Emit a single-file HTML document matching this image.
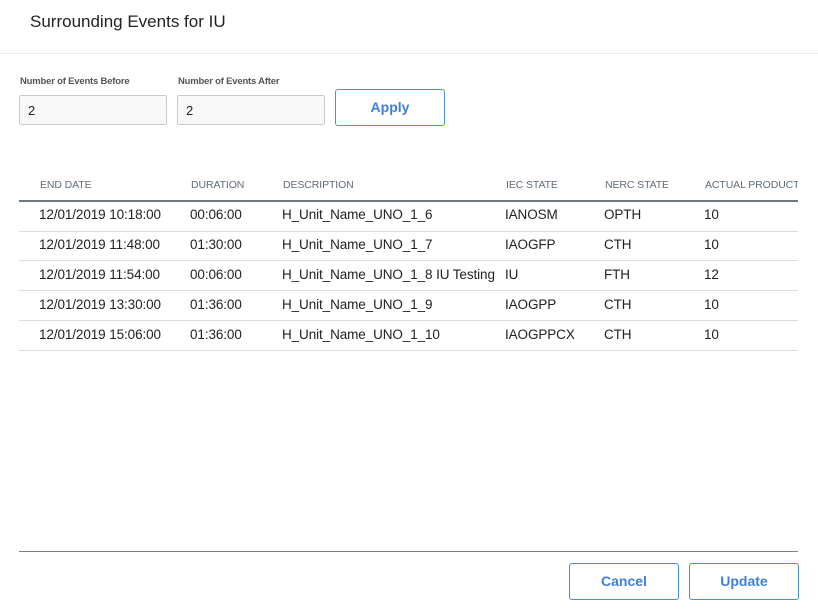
<!DOCTYPE html>
<html><head><style>
*{margin:0;padding:0;box-sizing:border-box}
body{width:818px;height:612px;background:#fff;font-family:"Liberation Sans",sans-serif;position:relative;overflow:hidden;color:#1f2328}
.a{position:absolute;white-space:nowrap}
.title{left:30px;top:12px;font-size:17px;color:#222}
.hl{left:0;top:53px;width:818px;height:1px;background:#e8eaec}
.lbl{font-size:9.5px;font-weight:bold;color:#555;top:76px;letter-spacing:-0.2px}
.inp{top:95px;width:148px;height:30px;border:1px solid #c9cccf;background:#f8f8f8;font-size:13px;padding:7px 0 0 8px;border-radius:2px}
.btn{border:1px solid #4a8ee0;border-radius:3px;color:#3f7fd8;font-weight:bold;font-size:14px;text-align:center;background:#fff}
.th{top:179px;font-size:10.5px;color:#5f6b78;letter-spacing:-0.1px}
.tbl{left:19px;top:200px;width:779px;height:2px;background:#707880}
.row{left:19px;width:779px;height:30px;border-bottom:1px solid #d8dde2}
.c{font-size:13.5px;color:#222;letter-spacing:-0.1px}
</style></head><body>
<div class="a title">Surrounding Events for IU</div>
<div class="a hl"></div>
<div class="a lbl" style="left:20px">Number of Events Before</div>
<div class="a lbl" style="left:178px">Number of Events After</div>
<div class="a inp" style="left:19px">2</div>
<div class="a inp" style="left:177px">2</div>
<div class="a btn" style="left:335px;top:89px;width:110px;height:37px;line-height:35px">Apply</div>
<div class="a th" style="left:40px">END DATE</div>
<div class="a th" style="left:191px">DURATION</div>
<div class="a th" style="left:283px">DESCRIPTION</div>
<div class="a th" style="left:506px">IEC STATE</div>
<div class="a th" style="left:605px">NERC STATE</div>
<div class="a th" style="left:705px;width:93px;overflow:hidden">ACTUAL PRODUCTION</div>
<div class="a tbl"></div>
<div class="a row" style="top:202px"></div>
<div class="a row" style="top:231px"></div>
<div class="a row" style="top:261px"></div>
<div class="a row" style="top:291px"></div>
<div class="a row" style="top:321px"></div>
<div class="a c" style="left:39px;top:207px">12/01/2019 10:18:00</div><div class="a c" style="left:190px;top:207px">00:06:00</div><div class="a c" style="left:282px;top:207px">H_Unit_Name_UNO_1_6</div><div class="a c" style="left:505px;top:207px">IANOSM</div><div class="a c" style="left:604px;top:207px">OPTH</div><div class="a c" style="left:704px;top:207px">10</div>
<div class="a c" style="left:39px;top:237px">12/01/2019 11:48:00</div><div class="a c" style="left:190px;top:237px">01:30:00</div><div class="a c" style="left:282px;top:237px">H_Unit_Name_UNO_1_7</div><div class="a c" style="left:505px;top:237px">IAOGFP</div><div class="a c" style="left:604px;top:237px">CTH</div><div class="a c" style="left:704px;top:237px">10</div>
<div class="a c" style="left:39px;top:267px">12/01/2019 11:54:00</div><div class="a c" style="left:190px;top:267px">00:06:00</div><div class="a c" style="left:282px;top:267px">H_Unit_Name_UNO_1_8 IU Testing</div><div class="a c" style="left:505px;top:267px">IU</div><div class="a c" style="left:604px;top:267px">FTH</div><div class="a c" style="left:704px;top:267px">12</div>
<div class="a c" style="left:39px;top:297px">12/01/2019 13:30:00</div><div class="a c" style="left:190px;top:297px">01:36:00</div><div class="a c" style="left:282px;top:297px">H_Unit_Name_UNO_1_9</div><div class="a c" style="left:505px;top:297px">IAOGPP</div><div class="a c" style="left:604px;top:297px">CTH</div><div class="a c" style="left:704px;top:297px">10</div>
<div class="a c" style="left:39px;top:327px">12/01/2019 15:06:00</div><div class="a c" style="left:190px;top:327px">01:36:00</div><div class="a c" style="left:282px;top:327px">H_Unit_Name_UNO_1_10</div><div class="a c" style="left:505px;top:327px">IAOGPPCX</div><div class="a c" style="left:604px;top:327px">CTH</div><div class="a c" style="left:704px;top:327px">10</div>
<div class="a" style="left:19px;top:551px;width:779px;height:1px;background:#7a8087"></div>
<div class="a btn" style="left:569px;top:563px;width:110px;height:37px;line-height:35px">Cancel</div>
<div class="a btn" style="left:689px;top:563px;width:110px;height:37px;line-height:35px">Update</div>
</body></html>
